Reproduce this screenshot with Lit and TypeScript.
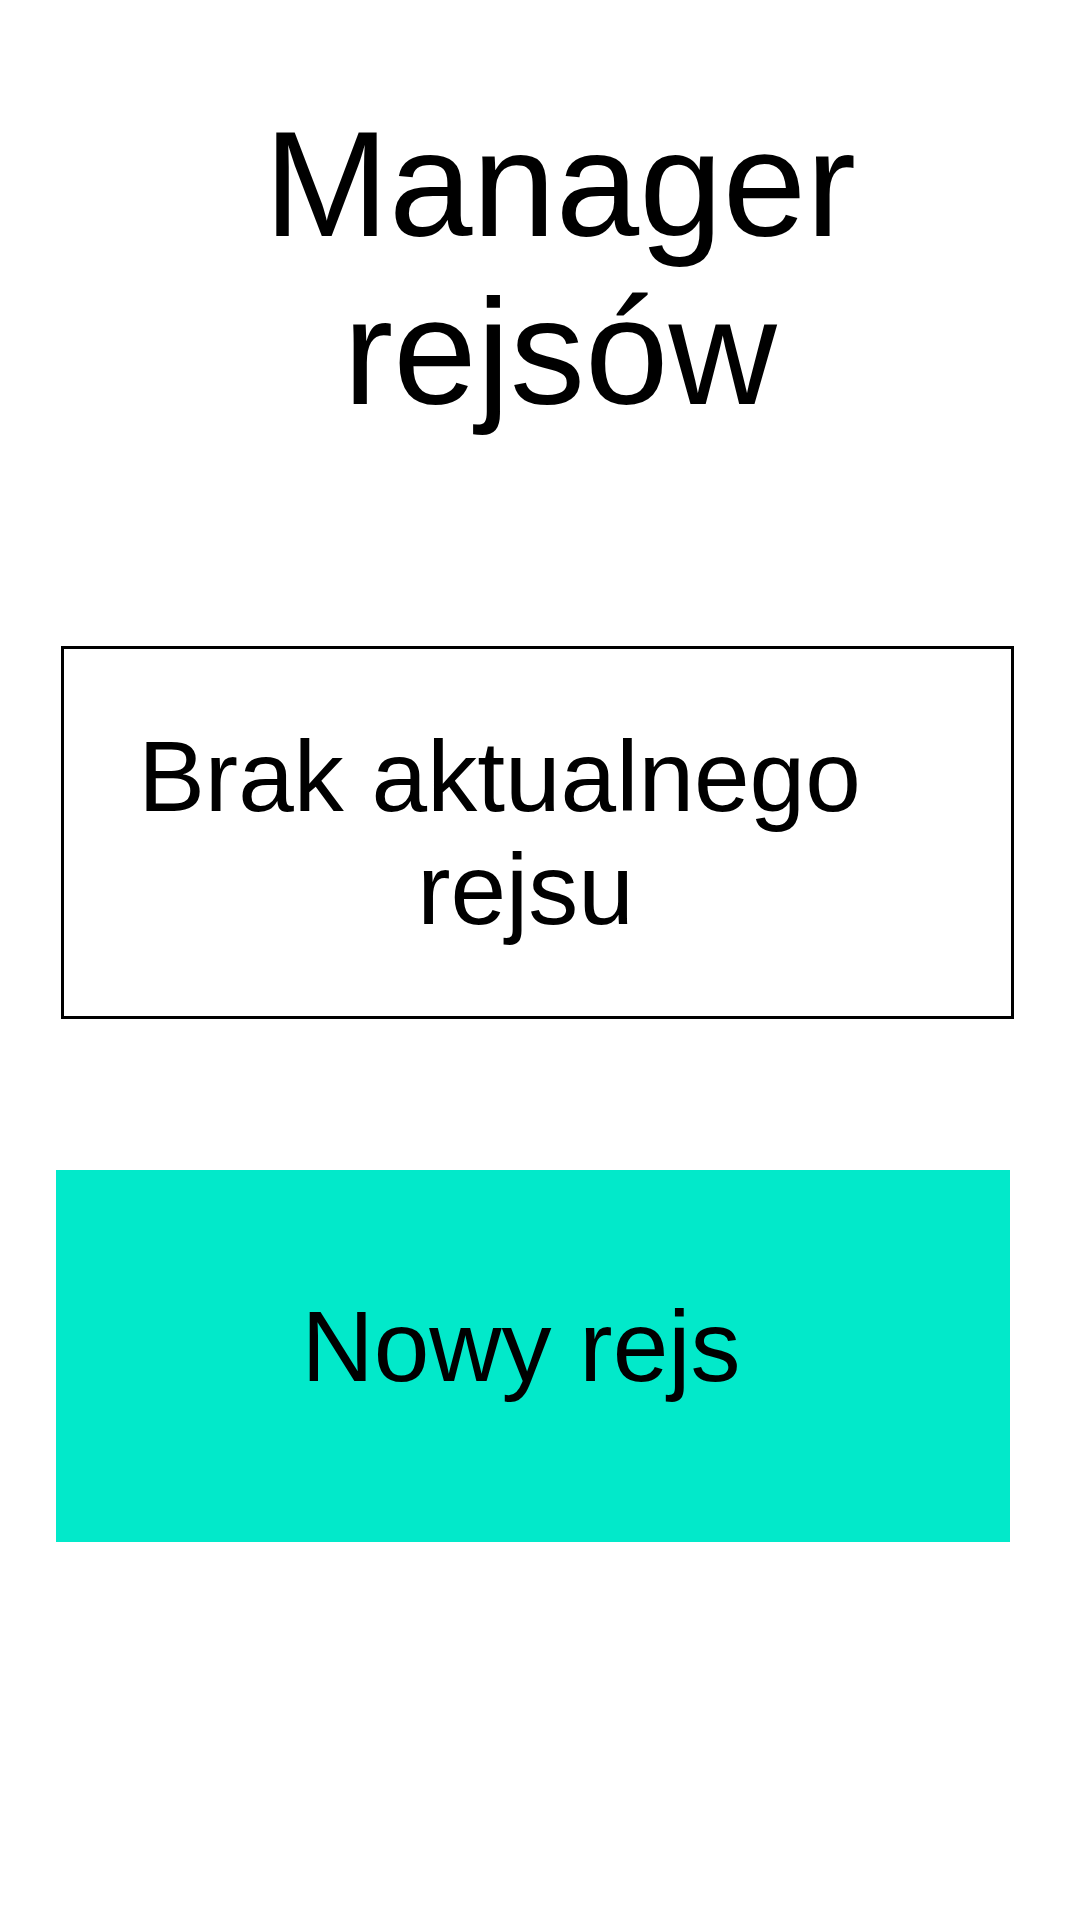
import { LitElement, html, css } from "lit";
import { customElement } from "lit/decorators.js";

@customElement("app-root")
export class AppRoot extends LitElement {
  static styles = css`
    :host {
      display: block;
      box-sizing: border-box;
      min-height: 100vh;
      background: #fff;
      color: #000;
      font-family: Arial, "Liberation Sans", sans-serif;
    }
    .page {
      display: flex;
      flex-direction: column;
      padding: 100px 66px 100px 56px;
    }
    .title {
      margin: 0 0 210px;
      padding-left: 50px;
      font-size: 150px;
      font-weight: 400;
      line-height: 168px;
      text-align: center;
    }
    .line {
      display: block;
    }
    .status {
      margin: 0 0 151px 5px;
      padding: 71px 24px 70px 0;
      border: 3px solid #000;
      font-size: 100px;
      line-height: 113px;
      text-align: center;
    }
    .status .lead {
      padding-right: 52px;
    }
    .action {
      margin: 0 4px 0 0;
      padding: 120px 24px 139px 0;
      border: 0;
      border-radius: 0;
      background: #02e9ca;
      color: inherit;
      font-family: inherit;
      font-size: 100px;
      line-height: 113px;
      text-align: center;
      cursor: pointer;
    }
  `;

  render() {
    return html`
      <main class="page">
        <h1 class="title">
          <span class="line">Manager</span>
          <span class="line">rejsów</span>
        </h1>
        <p class="status">
          <span class="line lead">Brak aktualnego</span>
          <span class="line">rejsu</span>
        </p>
        <button class="action" type="button">Nowy rejs</button>
      </main>
    `;
  }
}
